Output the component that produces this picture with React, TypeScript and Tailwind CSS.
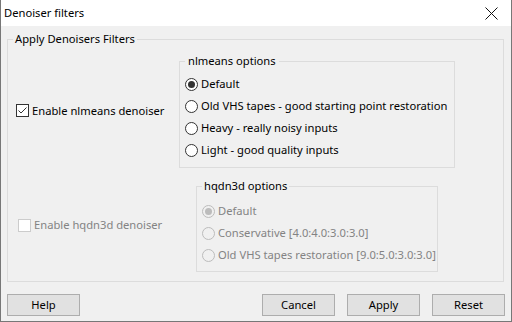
import React from 'react';

const font = { fontFamily: '"Noto Sans", "Open Sans", sans-serif' };

function Radio({ checked, disabled, label }: { checked?: boolean; disabled?: boolean; label: string }) {
  return (
    <div className="flex h-[22px] items-center whitespace-nowrap">
      <span
        className={
          'flex h-[13px] w-[13px] shrink-0 items-center justify-center rounded-full border ' +
          (disabled ? 'border-[#bcbcbc] bg-[#f0f0f0]' : 'border-[#333333] bg-white')
        }
      >
        {checked && (
          <span className={'h-[7px] w-[7px] rounded-full ' + (disabled ? 'bg-[#bcbcbc]' : 'bg-[#333333]')} />
        )}
      </span>
      <span className={'ml-[3px] text-[11.2px] leading-none ' + (disabled ? 'text-[#838383]' : 'text-black')}>{label}</span>
    </div>
  );
}

function Check({ checked, disabled, label }: { checked?: boolean; disabled?: boolean; label: string }) {
  return (
    <div className="flex items-center whitespace-nowrap">
      <span
        className={
          'flex h-[13px] w-[13px] shrink-0 items-center justify-center border ' +
          (disabled ? 'border-[#cccccc] bg-white' : 'border-[#333333] bg-white')
        }
      >
        {checked && (
          <svg width="11" height="11" viewBox="0 0 11 11">
            <path d="M1.5 5.5 L4 8 L9.5 2.5" fill="none" stroke="#333333" strokeWidth="1" />
          </svg>
        )}
      </span>
      <span className={'ml-[3px] text-[11.2px] leading-none ' + (disabled ? 'text-[#838383]' : 'text-black')}>{label}</span>
    </div>
  );
}

function Btn({ label }: { label: string }) {
  return (
    <button className="h-[22px] w-[73px] border border-[#adadad] bg-[#e1e1e1] text-[11.2px] leading-none text-black">{label}</button>
  );
}

export default function App() {
  return (
    <div style={font} className="flex h-[322px] w-[512px] flex-col overflow-hidden border-x border-b border-[#777777] bg-[#f0f0f0]">
      <div className="flex h-[26px] shrink-0 items-center justify-between bg-white pl-[3px] pr-[13px]">
        <span className="text-[11.2px] text-black">Denoiser filters</span>
        <svg width="13" height="13" viewBox="0 0 13 13">
          <path d="M0.5 0.5 L12.5 12.5 M12.5 0.5 L0.5 12.5" stroke="#111111" strokeWidth="1" />
        </svg>
      </div>

      <fieldset className="ml-[6px] mt-[5px] h-[251px] w-[497px] shrink-0 border border-[#dcdcdc] pt-[6px]">
        <legend className="ml-[5px] px-[2px] text-[11.2px] leading-[16px] text-black">Apply Denoisers Filters</legend>

        <div className="flex items-center">
          <div className="w-[171px] pl-[8px]">
            <Check checked label="Enable nlmeans denoiser" />
          </div>
          <fieldset className="h-[115px] w-[276px] border border-[#dcdcdc] pl-[5px] pt-[4px]">
            <legend className="px-[3px] text-[11.2px] leading-[16px] text-black">nlmeans options</legend>
            <Radio checked label="Default" />
            <Radio label="Old VHS tapes - good starting point restoration" />
            <Radio label="Heavy - really noisy inputs" />
            <Radio label="Light - good quality inputs" />
          </fieldset>
        </div>

        <div className="mt-[10px] flex items-center">
          <div className="w-[188px] pl-[10px]">
            <Check disabled label="Enable hqdn3d denoiser" />
          </div>
          <fieldset className="h-[94px] w-[242px] border border-[#dcdcdc] pl-[5px] pt-[6px]">
            <legend className="px-[2px] text-[11.2px] leading-[16px] text-black">hqdn3d options</legend>
            <Radio disabled checked label="Default" />
            <Radio disabled label="Conservative [4.0:4.0:3.0:3.0]" />
            <Radio disabled label="Old VHS tapes restoration [9.0:5.0:3.0:3.0]" />
          </fieldset>
        </div>
      </fieldset>

      <div className="mt-[12px] flex pl-[6px] pr-[6px]">
        <Btn label="Help" />
        <div className="ml-auto flex gap-[12px]">
          <Btn label="Cancel" />
          <Btn label="Apply" />
          <Btn label="Reset" />
        </div>
      </div>
    </div>
  );
}
